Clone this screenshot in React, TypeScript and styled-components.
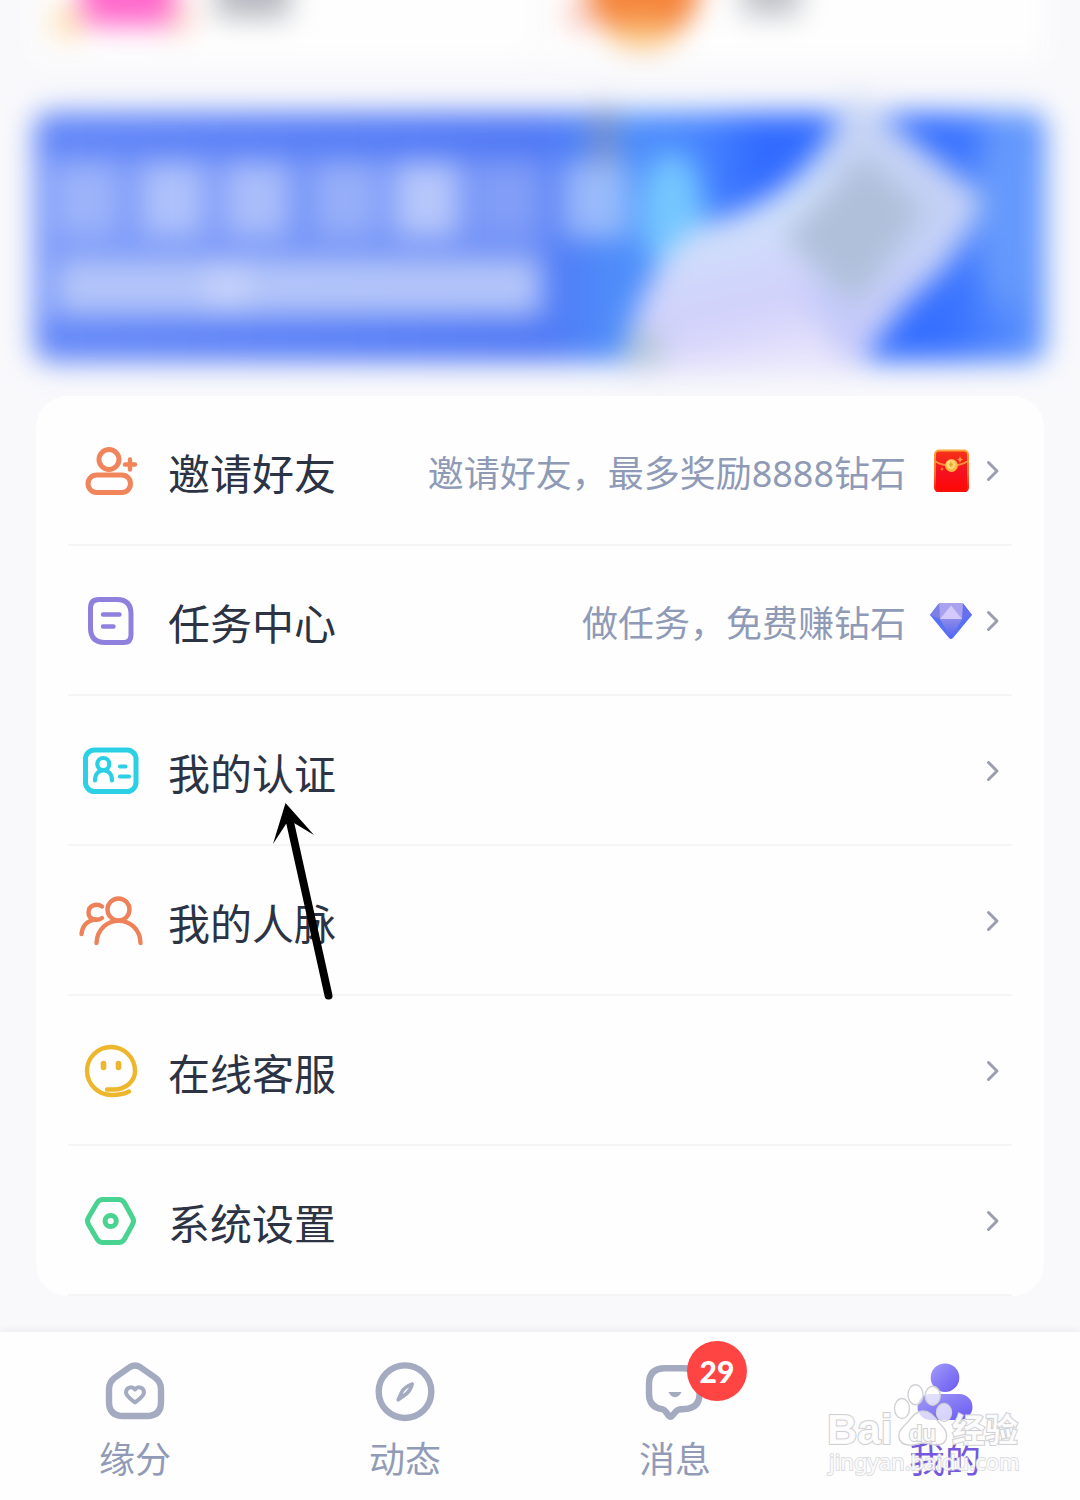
import React from "react";
import styled, { createGlobalStyle } from "styled-components";

const GlobalStyle = createGlobalStyle`
  * { box-sizing: border-box; }
  body {
    margin: 0;
    background: #f9f9fc;
    font-family: "Noto Sans", "Noto Sans CJK SC", sans-serif;
  }
`;

const Page = styled.div`
  position: relative;
  display: flex;
  flex-direction: column;
  min-height: 100vh;
  overflow: hidden;
`;

const Main = styled.main`
  flex: 1;
  display: flex;
  flex-direction: column;
  padding: 0 36px 36px;
`;

const Shortcuts = styled.div`
  display: grid;
  grid-template-columns: 1fr 1fr;
  height: 112px;
`;

const ShortcutArt = styled.svg`
  display: block;
  width: 100%;
  height: 80px;
  overflow: visible;
  filter: blur(14px);
`;

const BannerLink = styled.a`
  display: block;
  margin-bottom: 34px;
`;

const BannerArt = styled.svg`
  display: block;
  width: 100%;
  height: auto;
  overflow: visible;
  filter: blur(14px);
`;

const Card = styled.section`
  position: relative;
  padding: 0 32px;
  border-radius: 32px;
  background: #fefefe;
`;

const MenuList = styled.ul`
  margin: 0;
  padding: 0;
  list-style: none;
`;

const MenuLink = styled.a`
  display: flex;
  align-items: center;
  height: 150px;
  padding: 0 8px;
  border-bottom: 2px solid #f4f5f7;
  color: #2b3344;
  text-decoration: none;
`;

const MenuIcon = styled.svg`
  flex: none;
  width: 70px;
  height: 70px;
  margin-right: 22px;
  fill: none;
  stroke: ${(p) => p.color};
  stroke-width: 5;
  stroke-linecap: round;
  stroke-linejoin: round;
`;

const MenuLabel = styled.span`
  flex: 1;
  padding-top: 8px;
  font-size: 42px;
  line-height: 60px;
  white-space: nowrap;
`;

const MenuNote = styled.span`
  padding-top: 8px;
  font-size: 36px;
  line-height: 60px;
  color: #8f9ab7;
  white-space: nowrap;
`;

const RewardIcon = styled.svg`
  flex: none;
  width: 44px;
  height: 44px;
  margin: 0 8px 0 22px;
`;

const Chevron = styled.svg`
  flex: none;
  width: 24px;
  height: 24px;
  fill: none;
  stroke: #9a9eaf;
  stroke-width: 3;
  stroke-linecap: round;
  stroke-linejoin: round;
`;

const PointerArrow = styled.svg`
  position: absolute;
  left: 234px;
  top: 404px;
  width: 64px;
  height: 204px;
  pointer-events: none;
`;

const TabBar = styled.nav`
  display: grid;
  grid-template-columns: repeat(4, 1fr);
  height: 168px;
  padding-top: 30px;
  background: #fefefe;
  box-shadow: 0 -2px 8px rgba(40, 40, 50, 0.06);
`;

const Tab = styled.a<{ $active?: boolean }>`
  display: flex;
  flex-direction: column;
  align-items: center;
  gap: 14px;
  color: ${(p) => (p.$active ? "#7559dc" : "#919bb7")};
  font-size: 36px;
  line-height: 48px;
  text-decoration: none;
`;

const TabIconBox = styled.span`
  position: relative;
  display: block;
  height: 60px;
`;

const TabIcon = styled.svg`
  display: block;
  width: 60px;
  height: 60px;
  fill: none;
  stroke: #a4abc0;
  stroke-width: 6.4;
  stroke-linecap: round;
  stroke-linejoin: round;
`;

const Badge = styled.span`
  position: absolute;
  left: 42px;
  top: -21px;
  width: 60px;
  height: 60px;
  border-radius: 50%;
  background: #ff4444;
  color: #fff;
  font-family: Lato, sans-serif;
  font-size: 30px;
  font-weight: 900;
  line-height: 60px;
  text-align: center;
`;

const Watermark = styled.svg`
  position: absolute;
  right: 50px;
  bottom: 16px;
  width: 210px;
  height: 104px;
  pointer-events: none;
`;

function PinkShortcut() {
  return (
    <ShortcutArt viewBox="0 0 504 80" preserveAspectRatio="xMinYMin meet" aria-hidden="true">
      <rect x="0" y="-30" width="504" height="90" fill="#fefefe" />
      <circle cx="32" cy="22" r="18" fill="#fde0b8" />
      <circle cx="140" cy="16" r="20" fill="#fbdcd0" />
      <rect x="46" y="-60" width="92" height="86" rx="16" fill="#ff68cb" />
      <rect x="180" y="-60" width="74" height="78" fill="#b6b9c0" />
    </ShortcutArt>
  );
}

function OrangeShortcut() {
  return (
    <ShortcutArt viewBox="0 0 504 80" preserveAspectRatio="xMinYMin meet" aria-hidden="true">
      <rect x="0" y="-30" width="504" height="90" fill="#fefefe" />
      <circle cx="42" cy="14" r="18" fill="#fbd0c8" />
      <circle cx="104" cy="-14" r="56" fill="#f5853c" />
      <ellipse cx="102" cy="34" rx="34" ry="14" fill="#fabf78" />
      <rect x="202" y="-60" width="58" height="76" fill="#bfc2c8" />
    </ShortcutArt>
  );
}

const titleBlocks = [
  { x: 18, o: 0.28 },
  { x: 104, o: 0.42 },
  { x: 188, o: 0.4 },
  { x: 278, o: 0.28 },
  { x: 358, o: 0.5 },
  { x: 438, o: 0.16 },
  { x: 526, o: 0.42 },
];

function Banner() {
  return (
    <BannerArt viewBox="0 0 1008 250" aria-hidden="true">
      <defs>
        <linearGradient id="sky" x1="0" x2="1" y1="0" y2="0">
          <stop offset="0" stopColor="#6387f8" />
          <stop offset="0.5" stopColor="#5078f5" />
          <stop offset="0.58" stopColor="#4f8ffa" />
          <stop offset="0.66" stopColor="#4784ff" />
          <stop offset="0.72" stopColor="#306aff" />
          <stop offset="0.9" stopColor="#3670ff" />
          <stop offset="1" stopColor="#6398fc" />
        </linearGradient>
        <linearGradient id="sheet" x1="0" x2="0.3" y1="0" y2="1">
          <stop offset="0" stopColor="#c0cff2" />
          <stop offset="0.5" stopColor="#cfe0fb" />
          <stop offset="0.8" stopColor="#d1d0fb" />
          <stop offset="1" stopColor="#e6e4fb" />
        </linearGradient>
        <linearGradient id="flap" x1="0" x2="0" y1="0" y2="1">
          <stop offset="0" stopColor="#c6d4f4" />
          <stop offset="0.6" stopColor="#c4d0f8" />
          <stop offset="1" stopColor="#c6c6fa" />
        </linearGradient>
      </defs>
      <rect x="-2" width="1012" height="250" rx="16" fill="url(#sky)" />
      <rect x="556" y="-4" width="24" height="60" fill="#7990cc" />
      <ellipse cx="636" cy="100" rx="32" ry="60" fill="#74c6ff" />
      <ellipse cx="970" cy="100" rx="30" ry="100" fill="#6599fc" />
      <rect x="4" y="46" width="510" height="160" fill="#fff" opacity="0.14" />
      {titleBlocks.map((b) => (
        <rect key={b.x} x={b.x} y="50" width="66" height="76" fill="#fff" opacity={b.o} />
      ))}
      <rect x="20" y="146" width="484" height="58" rx="8" fill="#b2c4f9" />
      <rect x="170" y="150" width="44" height="50" fill="#c3d0fa" />
      <path d="M584 262 C596 200 618 140 664 114 C740 92 790 50 808 -14 L828 -14 L940 90 C932 140 860 190 818 262 Z" fill="url(#sheet)" />
      <path d="M810 -14 L834 -6 L942 80 C950 94 930 130 905 160 C870 195 835 215 812 254 L770 190 Z" fill="url(#flap)" />
      <path d="M828 44 L888 98 L820 192 L748 126 Z" fill="#b0c0da" />
      <rect x="590" y="220" width="36" height="34" fill="#b4c8d8" />
    </BannerArt>
  );
}

function RedPacket() {
  return (
    <RewardIcon viewBox="0 0 44 44" aria-hidden="true">
      <defs>
        <linearGradient id="packet" x1="0" x2="0" y1="0" y2="1">
          <stop offset="0" stopColor="#f73318" />
          <stop offset="0.55" stopColor="#f50f20" />
          <stop offset="1" stopColor="#ff0804" />
        </linearGradient>
        <linearGradient id="packetEdge" x1="0" x2="0" y1="0" y2="1">
          <stop offset="0" stopColor="#ffa53d" />
          <stop offset="0.6" stopColor="#fb6a28" />
          <stop offset="1" stopColor="#f51208" />
        </linearGradient>
      </defs>
      <rect x="7" y="2.5" width="33" height="41" rx="4" fill="url(#packet)" stroke="url(#packetEdge)" strokeWidth="2" />
      <path d="M7 13 C15 19 31 19 40 13" fill="none" stroke="#f9923a" strokeWidth="2" />
      <circle cx="23.5" cy="17.5" r="6.4" fill="#f9b741" />
      <circle cx="23" cy="16.5" r="4.6" fill="#ffd877" />
      <path d="M23 13.5 L25 16.5 L23 19.5 L21 16.5 Z" fill="#f3a52c" />
      <path d="M32 8 L33 10.5 L35 11.5 L33 12.5 L32 15 L31 12.5 L29 11.5 L31 10.5 Z" fill="#ff9a3c" />
      <circle cx="14" cy="21" r="1.5" fill="#f86a2a" />
    </RewardIcon>
  );
}

function Diamond() {
  return (
    <RewardIcon viewBox="0 0 44 44" aria-hidden="true">
      <defs>
        <linearGradient id="gem" x1="0" x2="0" y1="0" y2="1">
          <stop offset="0" stopColor="#8f8be9" />
          <stop offset="1" stopColor="#4b63f2" />
        </linearGradient>
      </defs>
      <path d="M13 5 H33 Q35 5 36 6.5 L44 17 L25 40 Q23 42 21 40 L2 17 L10 6.5 Q11 5 13 5 Z" fill="#5870f4" />
      <path d="M12 21 L2 17 L11 5.5 Z" fill="#7d7fe4" />
      <path d="M34 21 L44 17 L35 5.5 Z" fill="#6670ec" />
      <path d="M11 5 H35 L34 21 H12 Z" fill="#aaa2ef" />
      <path d="M23 7.5 L34 21 H12 Z" fill="#d3c9fb" />
      <path d="M12 21 H34 L23 41 Z" fill="url(#gem)" />
    </RewardIcon>
  );
}

const menu = [
  {
    label: "邀请好友",
    color: "#f0845a",
    note: "邀请好友，最多奖励8888钻石",
    reward: <RedPacket />,
    icon: (
      <>
        <circle cx="33" cy="24.5" r="10" />
        <rect x="12" y="40" width="42.5" height="17.5" rx="8.7" />
        <path d="M49 29.5 H59 M54 24.5 V34.5" strokeWidth="4.4" />
      </>
    ),
  },
  {
    label: "任务中心",
    color: "#8f80de",
    note: "做任务，免费赚钻石",
    reward: <Diamond />,
    icon: (
      <>
        <path d="M23 14.5 H41 Q55 14.5 55 29 V50 Q55 57.5 47.5 57.5 H29 Q14.5 57.5 14.5 43 V23 Q14.5 14.5 23 14.5 Z" />
        <path d="M27 29.5 H43.5 M27 41.5 H37.5" strokeWidth="4.4" />
      </>
    ),
  },
  {
    label: "我的认证",
    color: "#2bd0e4",
    icon: (
      <>
        <rect x="9.5" y="15" width="50.5" height="41.5" rx="9" />
        <g strokeWidth="4.2">
          <circle cx="27.3" cy="29" r="6" />
          <path d="M19 45.5 C19 39 22.5 35.5 27.5 35.5 C32.5 35.5 36 39 36 45.5 M44 31.5 H49.5 M44 41.5 H53" />
        </g>
      </>
    ),
  },
  {
    label: "我的人脉",
    color: "#ee8159",
    icon: (
      <g strokeWidth="4.4">
        <circle cx="42.5" cy="24.5" r="11" />
        <path d="M20.5 58 C22 28.500 63.5 28.5 64.5 58" />
        <path d="M26 21.5 C21 18 12.5 20 12.5 27.5 C12.5 34.5 21 36.5 26 33 M5.5 49 C6.5 39.5 13 34.5 21 34.5" />
      </g>
    ),
  },
  {
    label: "在线客服",
    color: "#edb62d",
    icon: (
      <>
        <path d="M53 56.5 C48 59 42 60 36 60 A24.500 24.500 0 0 1 11 36 A24 24 0 0 1 59 36 C59 46 50 54.5 38 54.5 H31" strokeWidth="4.4" />
        <path d="M27.5 28.5 V32.5 M42.5 28.5 V32.5" strokeWidth="5.6" />
      </>
    ),
  },
  {
    label: "系统设置",
    color: "#49d390",
    icon: (
      <>
        <path d="M27 14.5 H42.500 Q46.500 14.5 48.5 18 L56.5 32.5 Q58.5 36 56.5 39.5 L48.5 54 Q46.5 57.5 42.5 57.5 H27 Q23 57.5 21 54 L12.5 39.5 Q10.5 36 12.5 32.5 L21 18 Q23 14.5 27 14.5 Z" />
        <circle cx="34.7" cy="36" r="5.6" />
      </>
    ),
  },
];

const tabs = [
  {
    label: "缘分",
    icon: (
      <>
        <path d="M25 5 Q30 2 35 5 L50 15.5 Q56 20 56 27 V40 Q56 54 42 54 H18 Q4 54 4 40 V27 Q4 20 10 15.5 Z" />
        <path d="M30 27.500 C27 23.5 21 25.5 21 30.5 C21 34 26 37.5 30 40.5 C34 37.5 39 34 39 30.5 C39 25.5 33 23.5 30 27.5 Z" strokeWidth="4" />
      </>
    ),
  },
  {
    label: "动态",
    icon: (
      <>
        <circle cx="30" cy="29.7" r="26.3" />
        <path d="M37.2 22 C32 24 28 27 26.5 30.500 L23.2 37.8 L28.8 33.8 C33 31 36 27.500 37.2 22 Z" strokeWidth="3.6" />
      </>
    ),
  },
  {
    label: "消息",
    badge: "29",
    icon: (
      <>
        <path d="M20 6.3 H38 Q54.5 6.3 54.5 22 V32 Q54.5 46 40 47 L34 47.5 Q32 48 30.5 50 L27 54 Q25.5 55.8 24 54 L21 50 Q19.5 47.8 17 47.2 Q4 45 4 32 V22 Q4 6.3 20 6.3 Z" />
        <path d="M23.5 30 H36.5 Q34 35.2 30 35.2 Q26 35.2 23.5 30 Z" fill="#a4abc0" stroke="none" />
      </>
    ),
  },
  {
    label: "我的",
    active: true,
    icon: (
      <>
        <defs>
          <linearGradient id="me" x1="0" x2="1" y1="0" y2="1">
            <stop offset="0" stopColor="#a39df8" />
            <stop offset="0.8" stopColor="#7466f3" />
          </linearGradient>
        </defs>
        <circle cx="30" cy="15.7" r="14.3" fill="url(#me)" stroke="none" />
        <rect x="2.5" y="32" width="55" height="26" rx="13" fill="url(#me)" stroke="none" />
      </>
    ),
  },
];

export default function App() {
  return (
    <Page>
      <GlobalStyle />
      <Main>
        <Shortcuts>
          <PinkShortcut />
          <OrangeShortcut />
        </Shortcuts>
        <BannerLink href="#banner" aria-label="公告">
          <Banner />
        </BannerLink>
        <Card>
          <MenuList>
            {menu.map((item) => (
              <li key={item.label}>
                <MenuLink href="#menu">
                  <MenuIcon viewBox="0 0 70 70" color={item.color} aria-hidden="true">
                    {item.icon}
                  </MenuIcon>
                  <MenuLabel>{item.label}</MenuLabel>
                  {item.note && <MenuNote>{item.note}</MenuNote>}
                  {item.reward}
                  <Chevron viewBox="0 0 24 24" aria-hidden="true">
                    <path d="M8.5 4.5 L17 13 L8.5 21.5" />
                  </Chevron>
                </MenuLink>
              </li>
            ))}
          </MenuList>
          <PointerArrow viewBox="0 0 64 204" aria-hidden="true">
            <path d="M20 22 L58.5 195.5" stroke="#000" strokeWidth="8" strokeLinecap="round" />
            <path d="M15.5 3 L44 35 L24 23 L16 24 L3 44 Z" fill="#000" />
          </PointerArrow>
        </Card>
      </Main>
      <TabBar>
        {tabs.map((tab) => (
          <Tab key={tab.label} href="#tab" $active={tab.active} aria-current={tab.active ? "page" : undefined}>
            <TabIconBox>
              <TabIcon viewBox="0 0 60 60" aria-hidden="true">
                {tab.icon}
              </TabIcon>
              {tab.badge && <Badge>{tab.badge}</Badge>}
            </TabIconBox>
            <span>{tab.label}</span>
          </Tab>
        ))}
      </TabBar>
      <Watermark viewBox="820 1380 210 104">
        <g fill="#fff" fillOpacity="0.7" stroke="#d2d2d6" strokeWidth="1.4">
          <ellipse cx="902" cy="1408.5" rx="7.5" ry="10" />
          <ellipse cx="915.5" cy="1394.7" rx="7.5" ry="10" />
          <ellipse cx="932.7" cy="1395.7" rx="7.5" ry="9.5" />
          <ellipse cx="944" cy="1412.5" rx="7.5" ry="9" />
          <path d="M923 1411 C932 1411 936 1420 942 1426 C950 1434 947 1445 937 1445 C932 1445 928 1443 923 1443 C918 1443 914 1446 908 1445 C898 1444 896 1434 903 1427 C910 1421 914 1411 923 1411 Z" />
        </g>
        <g fill="#fff" fillOpacity="0.9" stroke="#d0d0d4" strokeWidth="2" paintOrder="stroke" fontWeight="700">
          <text x="827" y="1444" fontSize="42" fontFamily="Liberation Sans, sans-serif">Bai</text>
          <text x="909" y="1441" fontSize="22" fontFamily="Liberation Sans, sans-serif">du</text>
          <text x="952" y="1442" fontSize="33" fontFamily="Noto Sans CJK SC, sans-serif">经验</text>
          <text x="829" y="1470" fontSize="22" fontWeight="400" strokeWidth="2" strokeOpacity="0.7" fontFamily="Noto Sans, sans-serif">jingyan.baidu.com</text>
        </g>
      </Watermark>
    </Page>
  );
}
